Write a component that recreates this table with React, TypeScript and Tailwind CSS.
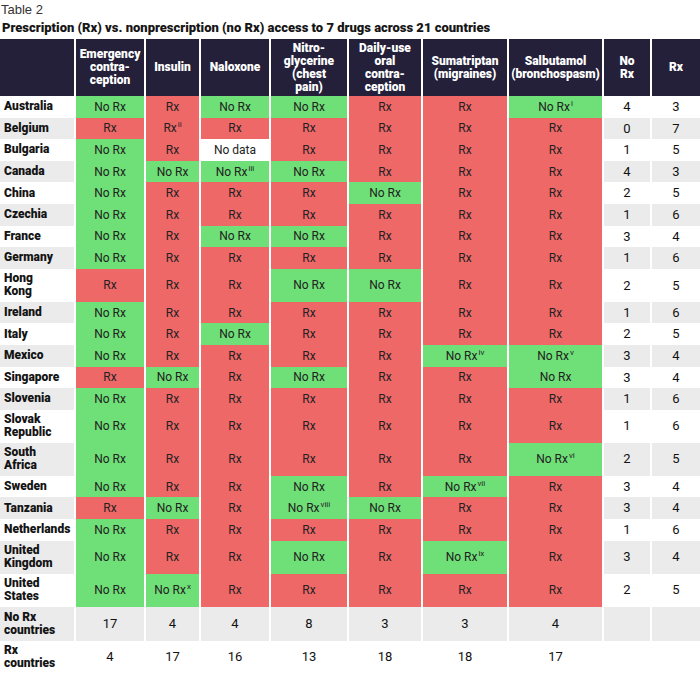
type Val = 'N' | 'R' | 'D';

interface Cell {
  v: Val;
  note?: string;
}

interface CountryRow {
  name: string[];
  cells: Cell[];
  noRx: number;
  rx: number;
  tall?: boolean;
}

const N: Cell = { v: 'N' };
const R: Cell = { v: 'R' };
const n = (note: string): Cell => ({ v: 'N', note });
const r = (note: string): Cell => ({ v: 'R', note });

const rows: CountryRow[] = [
  { name: ['Australia'], cells: [N, R, N, N, R, R, n('i')], noRx: 4, rx: 3 },
  { name: ['Belgium'], cells: [R, r('ii'), R, R, R, R, R], noRx: 0, rx: 7 },
  { name: ['Bulgaria'], cells: [N, R, { v: 'D' }, R, R, R, R], noRx: 1, rx: 5 },
  { name: ['Canada'], cells: [N, N, n('iii'), N, R, R, R], noRx: 4, rx: 3 },
  { name: ['China'], cells: [N, R, R, R, N, R, R], noRx: 2, rx: 5 },
  { name: ['Czechia'], cells: [N, R, R, R, R, R, R], noRx: 1, rx: 6 },
  { name: ['France'], cells: [N, R, N, N, R, R, R], noRx: 3, rx: 4 },
  { name: ['Germany'], cells: [N, R, R, R, R, R, R], noRx: 1, rx: 6 },
  { name: ['Hong', 'Kong'], cells: [R, R, R, N, N, R, R], noRx: 2, rx: 5, tall: true },
  { name: ['Ireland'], cells: [N, R, R, R, R, R, R], noRx: 1, rx: 6 },
  { name: ['Italy'], cells: [N, R, N, R, R, R, R], noRx: 2, rx: 5 },
  { name: ['Mexico'], cells: [N, R, R, R, R, n('iv'), n('v')], noRx: 3, rx: 4 },
  { name: ['Singapore'], cells: [R, N, R, N, R, R, N], noRx: 3, rx: 4 },
  { name: ['Slovenia'], cells: [N, R, R, R, R, R, R], noRx: 1, rx: 6 },
  { name: ['Slovak', 'Republic'], cells: [N, R, R, R, R, R, R], noRx: 1, rx: 6, tall: true },
  { name: ['South', 'Africa'], cells: [N, R, R, R, R, R, n('vi')], noRx: 2, rx: 5, tall: true },
  { name: ['Sweden'], cells: [N, R, R, N, R, n('vii'), R], noRx: 3, rx: 4 },
  { name: ['Tanzania'], cells: [R, N, R, n('viii'), N, R, R], noRx: 3, rx: 4 },
  { name: ['Netherlands'], cells: [N, R, R, R, R, R, R], noRx: 1, rx: 6 },
  { name: ['United', 'Kingdom'], cells: [N, R, R, N, R, n('ix'), R], noRx: 3, rx: 4, tall: true },
  { name: ['United', 'States'], cells: [N, n('x'), R, R, R, R, R], noRx: 2, rx: 5, tall: true },
];

const headers: string[][] = [
  ['Emergency', 'contra-', 'ception'],
  ['Insulin'],
  ['Naloxone'],
  ['Nitro-', 'glycerine', '(chest', 'pain)'],
  ['Daily-use', 'oral', 'contra-', 'ception'],
  ['Sumatriptan', '(migraines)'],
  ['Salbutamol', '(bronchospasm)'],
  ['No', 'Rx'],
  ['Rx'],
];

const noRxTotals = [17, 4, 4, 8, 3, 3, 4];
const rxTotals = [4, 17, 16, 13, 18, 18, 17];

const grid = 'grid grid-cols-[74px_68px_53px_68px_76px_72px_84px_93px_46px_48px] gap-x-[2px]';
const heavy = "font-['Roboto',sans-serif] font-black";
const body = "font-['Roboto',sans-serif]";

const cellBg: Record<Val, string> = {
  N: 'bg-[#6fdf77]',
  R: 'bg-[#ef6868]',
  D: 'bg-white',
};

const Label = ({ lines }: { lines: string[] }) => (
  <div className={`flex flex-col justify-center pl-[4px] text-[12px] leading-[13px] text-[#141414] ${heavy}`}>
    {lines.map((l) => (
      <span key={l}>{l}</span>
    ))}
  </div>
);

const DrugCell = ({ cell }: { cell: Cell }) => (
  <div className={`flex items-center justify-center ${cellBg[cell.v]} text-[12px] text-[#222] ${body}`}>
    <span>{cell.v === 'N' ? 'No Rx' : cell.v === 'R' ? 'Rx' : 'No data'}</span>
    {cell.note && <span className="relative -top-[3px] ml-[1px] text-[8px] leading-none">{cell.note}</span>}
  </div>
);

const Num = ({ value }: { value?: number }) => (
  <div className={`flex items-center justify-center text-[13px] text-[#111] ${body}`}>{value}</div>
);

export default function App() {
  return (
    <div className="w-[700px] h-[673px] overflow-hidden bg-white">
      <div className="pt-[2px] pl-[1px] font-['Liberation_Sans',sans-serif] text-[13px] leading-[16px] text-[#333]">
        Table 2
      </div>
      <div className={`mt-[2px] pl-[2px] text-[13px] leading-[16px] text-[#161616] ${heavy}`}>
        Prescription (Rx) vs. nonprescription (no Rx) access to 7 drugs across 21 countries
      </div>

      <div className="mt-[3px]">
        {/* Header */}
        <div className={`${grid} h-[57px]`}>
          <div className="bg-[#24203a]" />
          {headers.map((h) => (
            <div
              key={h.join()}
              className={`flex flex-col items-center justify-center bg-[#24203a] text-center text-[12px] leading-[13px] text-white ${heavy}`}
            >
              {h.map((l) => (
                <span key={l}>{l}</span>
              ))}
            </div>
          ))}
        </div>

        {/* Country rows */}
        {rows.map((row, i) => {
          const stripe = i % 2 === 1 ? 'bg-[#ebebeb]' : 'bg-white';
          return (
            <div key={row.name.join()} className={`${grid} ${row.tall ? 'h-[33px]' : 'h-[21.6px]'}`}>
              <div className={`flex ${stripe}`}>
                <Label lines={row.name} />
              </div>
              {row.cells.map((c, j) => (
                <DrugCell key={j} cell={c} />
              ))}
              <div className={`flex justify-center ${stripe}`}>
                <Num value={row.noRx} />
              </div>
              <div className={`flex justify-center ${stripe}`}>
                <Num value={row.rx} />
              </div>
            </div>
          );
        })}

        {/* Totals */}
        <div className={`${grid} h-[34px]`}>
          <div className="flex bg-[#ebebeb]">
            <Label lines={['No Rx', 'countries']} />
          </div>
          {noRxTotals.map((t, j) => (
            <div key={j} className="flex justify-center bg-[#ebebeb]">
              <Num value={t} />
            </div>
          ))}
          <div className="bg-[#ebebeb]" />
          <div className="bg-[#ebebeb]" />
        </div>
        <div className={`${grid} h-[32px]`}>
          <div className="flex">
            <Label lines={['Rx', 'countries']} />
          </div>
          {rxTotals.map((t, j) => (
            <div key={j} className="flex justify-center">
              <Num value={t} />
            </div>
          ))}
          <div />
          <div />
        </div>
      </div>
    </div>
  );
}
